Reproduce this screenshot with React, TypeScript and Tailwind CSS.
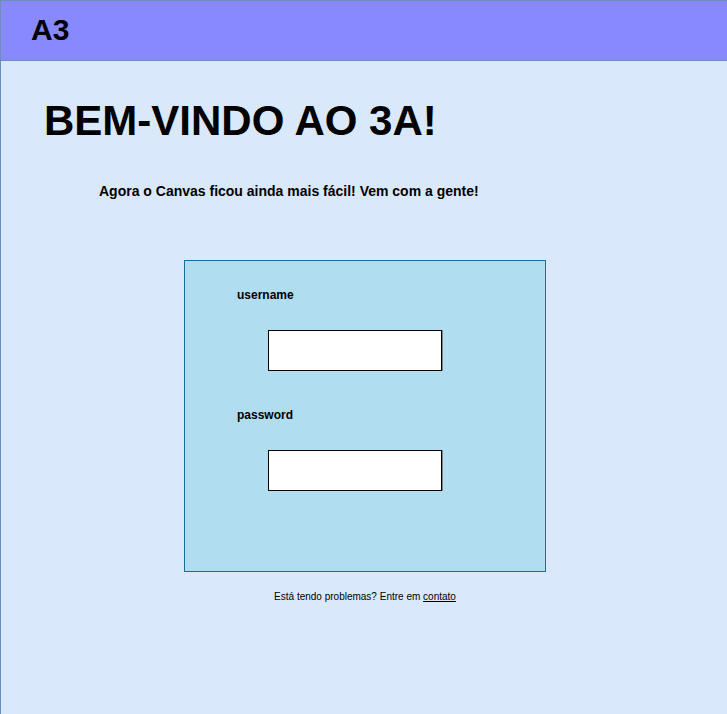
export default function App() {
  return (
    <div className="h-[714px] w-full overflow-hidden border-l border-[#6c8ebf] bg-[#dae8fc] font-['Liberation_Sans',Arial,sans-serif] text-black">
      {/* Top bar */}
      <header className="h-[61px] border-t border-b border-[#6c8ebf] bg-[#8888ff] pt-[14px] pl-[30px]">
        <span className="block text-[30px] font-bold leading-none">A3</span>
      </header>

      {/* Welcome */}
      <h1 className="mt-[39px] ml-[43px] text-[42px] font-bold leading-none">BEM-VINDO AO 3A!</h1>
      <p className="mt-[42px] ml-[98px] text-[14px] font-bold leading-none">
        Agora o Canvas ficou ainda mais fácil! Vem com a gente!
      </p>

      {/* Login card */}
      <form className="mt-[62px] ml-[183px] flex h-[312px] w-[362px] flex-col border border-[#10739e] bg-[#b1ddf0]">
        <label className="mt-[28px] ml-[52px] text-[12px] font-bold leading-none">username</label>
        <input
          type="text"
          className="mt-[29px] ml-[83px] h-[41px] w-[174px] border border-black bg-white shadow-[1px_0_0_#808080] outline-none"
        />
        <label className="mt-[38px] ml-[52px] text-[12px] font-bold leading-none">password</label>
        <input
          type="password"
          className="mt-[29px] ml-[83px] h-[41px] w-[174px] border border-black bg-white shadow-[1px_0_0_#808080] outline-none"
        />
      </form>

      <p className="mt-[20px] ml-[183px] w-[362px] text-center text-[10px] leading-none">
        Está tendo problemas? Entre em <a className="underline">contato</a>
      </p>
    </div>
  );
}
